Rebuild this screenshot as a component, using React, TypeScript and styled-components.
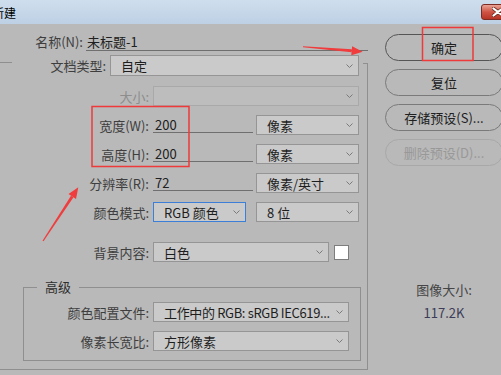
import React from 'react';
import styled, { createGlobalStyle, css } from 'styled-components';

const GlobalStyle = createGlobalStyle`
  html, body {
    margin: 0;
    padding: 0;
    background: #b9b9b9;
  }
  body {
    font-family: "Noto Sans CJK SC", "Noto Sans", sans-serif;
    font-size: 13px;
  }
`;

const LINE = '#8f8f8f';

const Window = styled.div`
  position: relative;
  width: 501px;
  height: 375px;
  overflow: hidden;
  background: #b9b9b9;
  color: #202020;
`;

const TitleBar = styled.div`
  display: flex;
  justify-content: space-between;
  height: 24px;
  background: linear-gradient(#cfdeed, #bdd0e4);
`;

const Title = styled.span`
  margin-left: -8px;
  font-size: 12px;
  line-height: 26px;
  color: #000;
`;

const CloseButton = styled.div`
  display: flex;
  align-items: center;
  justify-content: center;
  width: 34px;
  height: 16px;
  margin-top: 4px;
  margin-right: -14px;
  box-sizing: border-box;
  border: 1px solid #7c2c22;
  border-radius: 3px;
  background: linear-gradient(#e9a395, #cf5445 50%, #b73426);
`;

const Content = styled.div`
  display: flex;
`;

const LeftPanel = styled.div`
  display: flex;
  flex-direction: column;
  flex-shrink: 0;
  width: 368px;
  padding-top: 8px;
`;

const NameRow = styled.div`
  display: flex;
  height: 19px;
`;

const NameLabel = styled.span`
  width: 86px;
  text-align: right;
  line-height: 19px;
  color: #3e3e3e;
`;

const NameInput = styled.div`
  flex-shrink: 0;
  width: 281px;
  height: 17px;
  margin-left: 3px;
  padding-top: 1px;
  padding-left: 1px;
  line-height: 17px;
  border-bottom: 1px solid #6f6f6f;
`;

const GroupHeader = styled.div`
  display: flex;
  height: 21px;
  margin-top: 4px;
`;

const LeftStub = styled.div`
  width: 12px;
  margin-top: 7px;
  border-top: 1px solid ${LINE};
`;

const RightStub = styled.div`
  width: 4px;
  margin-left: 4px;
  margin-top: 8px;
  border-top: 1px solid ${LINE};
  border-right: 1px solid ${LINE};
`;

const HeaderLabel = styled.span`
  width: 94px;
  margin-right: 4px;
  text-align: right;
  line-height: 21px;
  color: #3e3e3e;
`;

const GroupBody = styled.div`
  display: flex;
  flex-direction: column;
  width: 368px;
  box-sizing: border-box;
  padding: 10px 0 8px;
  border-right: 1px solid ${LINE};
  border-bottom: 1px solid ${LINE};
`;

const Row = styled.div<{ $mt?: number }>`
  display: flex;
  align-items: center;
  height: 20px;
  margin-top: ${(p) => p.$mt ?? 0}px;
`;

const Label = styled.span<{ $width?: number; $disabled?: boolean }>`
  width: ${(p) => p.$width ?? 149}px;
  margin-right: 4px;
  text-align: right;
  white-space: nowrap;
  color: ${(p) => (p.$disabled ? '#8d8d8d' : '#3e3e3e')};
`;

const SelectBox = styled.div<{ $width: number; $height?: number; $disabled?: boolean; $focused?: boolean; $ml?: number }>`
  display: flex;
  align-items: center;
  justify-content: space-between;
  flex-shrink: 0;
  width: ${(p) => p.$width}px;
  height: ${(p) => p.$height ?? 20}px;
  margin-left: ${(p) => p.$ml ?? 0}px;
  padding: 0 5px 0 10px;
  box-sizing: border-box;
  background: #cacaca;
  border: 1px solid #959595;
  white-space: nowrap;
  color: #1e1e1e;
  ${(p) =>
    p.$disabled &&
    css`
      background: #bdbdbd;
      border-color: #a9a9a9;
    `}
  ${(p) =>
    p.$focused &&
    css`
      border-color: #3b7fd9;
    `}
`;

const SelectText = styled.span<{ $tight?: boolean }>`
  overflow: hidden;
  letter-spacing: ${(p) => (p.$tight ? '-0.35px' : 'normal')};
`;

const ValueInput = styled.div`
  align-self: flex-start;
  flex-shrink: 0;
  width: 98px;
  height: 14px;
  padding-top: 3px;
  padding-left: 2px;
  box-sizing: content-box;
  line-height: 14px;
  border-bottom: 1px solid #6f6f6f;
`;

const Swatch = styled.div`
  width: 15px;
  height: 15px;
  margin-left: 5px;
  box-sizing: border-box;
  background: #ffffff;
  border: 1px solid #7d7d7d;
`;

const Advanced = styled.fieldset`
  width: 338px;
  box-sizing: border-box;
  margin: 18px 0 0 23px;
  padding: 0 0 9px;
  border: 1px solid ${LINE};
`;

const Legend = styled.legend`
  margin-left: 13px;
  padding: 0 8px;
  line-height: 14px;
  color: #2e2e2e;
`;

const RightColumn = styled.div`
  display: flex;
  flex-direction: column;
  flex-shrink: 0;
  margin-left: 17px;
  padding-top: 10px;
`;

const PillButton = styled.div<{ $variant?: 'default' | 'normal' | 'disabled' }>`
  display: flex;
  align-items: center;
  justify-content: center;
  width: 118px;
  height: 27px;
  box-sizing: border-box;
  border-radius: 14px;
  border: 1px solid
    ${(p) => (p.$variant === 'default' ? '#555555' : p.$variant === 'disabled' ? '#a8a8a8' : '#7a7a7a')};
  color: ${(p) => (p.$variant === 'disabled' ? '#989898' : '#202020')};
  & + & {
    margin-top: 8px;
  }
`;

const ImageSize = styled.div`
  display: flex;
  flex-direction: column;
  align-items: center;
  width: 118px;
  margin-top: 115px;
`;

const ImageSizeLabel = styled.span`
  line-height: 18px;
  color: #454545;
`;

const ImageSizeValue = styled.span`
  margin-top: 5px;
  line-height: 18px;
  color: #3c3c58;
`;

const Overlay = styled.svg`
  position: absolute;
  left: 0;
  top: 0;
  pointer-events: none;
`;

const Chevron = () => (
  <svg width="7" height="4" viewBox="0 0 7 4">
    <polyline points="0.5,0.5 3.5,3.5 6.5,0.5" fill="none" stroke="#7a7a7a" strokeWidth="1" />
  </svg>
);

type SelectProps = {
  width: number;
  text?: string;
  height?: number;
  disabled?: boolean;
  focused?: boolean;
  tight?: boolean;
  ml?: number;
};

const Select = ({ width, text, height, disabled, focused, tight, ml }: SelectProps) => (
  <SelectBox $width={width} $height={height} $disabled={disabled} $focused={focused} $ml={ml}>
    <SelectText $tight={tight}>{text}</SelectText>
    <Chevron />
  </SelectBox>
);

export default function App() {
  return (
    <>
      <GlobalStyle />
      <Window>
        <TitleBar>
          <Title>新建</Title>
          <CloseButton>
            <svg width="12" height="10" viewBox="0 0 12 10">
              <path d="M1.5 1.5 L10.5 8.5 M10.5 1.5 L1.5 8.5" stroke="#6b2a22" strokeWidth="3.6" strokeLinecap="round" />
              <path d="M1.5 1.5 L10.5 8.5 M10.5 1.5 L1.5 8.5" stroke="#ffffff" strokeWidth="2.2" strokeLinecap="round" />
            </svg>
          </CloseButton>
        </TitleBar>
        <Content>
          <LeftPanel>
            <NameRow>
              <NameLabel>名称(N):</NameLabel>
              <NameInput>未标题-1</NameInput>
            </NameRow>
            <GroupHeader>
              <LeftStub />
              <HeaderLabel>文档类型:</HeaderLabel>
              <Select width={249} height={21} text="自定" />
              <RightStub />
            </GroupHeader>
            <GroupBody>
              <Row>
                <Label $disabled>大小:</Label>
                <Select width={206} disabled />
              </Row>
              <Row $mt={9}>
                <Label>宽度(W):</Label>
                <ValueInput>200</ValueInput>
                <Select width={103} ml={3} text="像素" />
              </Row>
              <Row $mt={9}>
                <Label>高度(H):</Label>
                <ValueInput>200</ValueInput>
                <Select width={103} ml={3} text="像素" />
              </Row>
              <Row $mt={9}>
                <Label>分辨率(R):</Label>
                <ValueInput>72</ValueInput>
                <Select width={103} ml={3} text="像素/英寸" />
              </Row>
              <Row $mt={9}>
                <Label>颜色模式:</Label>
                <Select width={93} focused text="RGB 颜色" />
                <Select width={103} ml={10} text="8 位" />
              </Row>
              <Row $mt={20}>
                <Label>背景内容:</Label>
                <Select width={176} text="白色" />
                <Swatch />
              </Row>
              <Advanced>
                <Legend>高级</Legend>
                <Row $mt={8}>
                  <Label $width={125}>颜色配置文件:</Label>
                  <Select width={196} tight text="工作中的 RGB: sRGB IEC619..." />
                </Row>
                <Row $mt={9}>
                  <Label $width={125}>像素长宽比:</Label>
                  <Select width={196} text="方形像素" />
                </Row>
              </Advanced>
            </GroupBody>
          </LeftPanel>
          <RightColumn>
            <PillButton $variant="default">确定</PillButton>
            <PillButton>复位</PillButton>
            <PillButton>存储预设(S)...</PillButton>
            <PillButton $variant="disabled">删除预设(D)...</PillButton>
            <ImageSize>
              <ImageSizeLabel>图像大小:</ImageSizeLabel>
              <ImageSizeValue>117.2K</ImageSizeValue>
            </ImageSize>
          </RightColumn>
        </Content>
        <Overlay width="501" height="375" viewBox="0 0 501 375">
          <rect x="92" y="106.5" width="97" height="60" fill="none" stroke="#ee3a3a" strokeWidth="1.5" />
          <rect x="422.5" y="27.5" width="50.5" height="33" fill="none" stroke="#ee3a3a" strokeWidth="1.5" />
          <polygon points="303,46.2 303,47.2 351.6,52.3 351.8,49.3" fill="#f03c3c" />
          <polygon points="362.7,51.7 351.3,55.3 352.1,46.3" fill="#f03c3c" />
          <polygon points="43.5,241.3 42.5,240.7 71,195.7 73.5,197.3" fill="#f03c3c" />
          <polygon points="78.3,187.3 76,199 68.5,194" fill="#f03c3c" />
        </Overlay>
      </Window>
    </>
  );
}
